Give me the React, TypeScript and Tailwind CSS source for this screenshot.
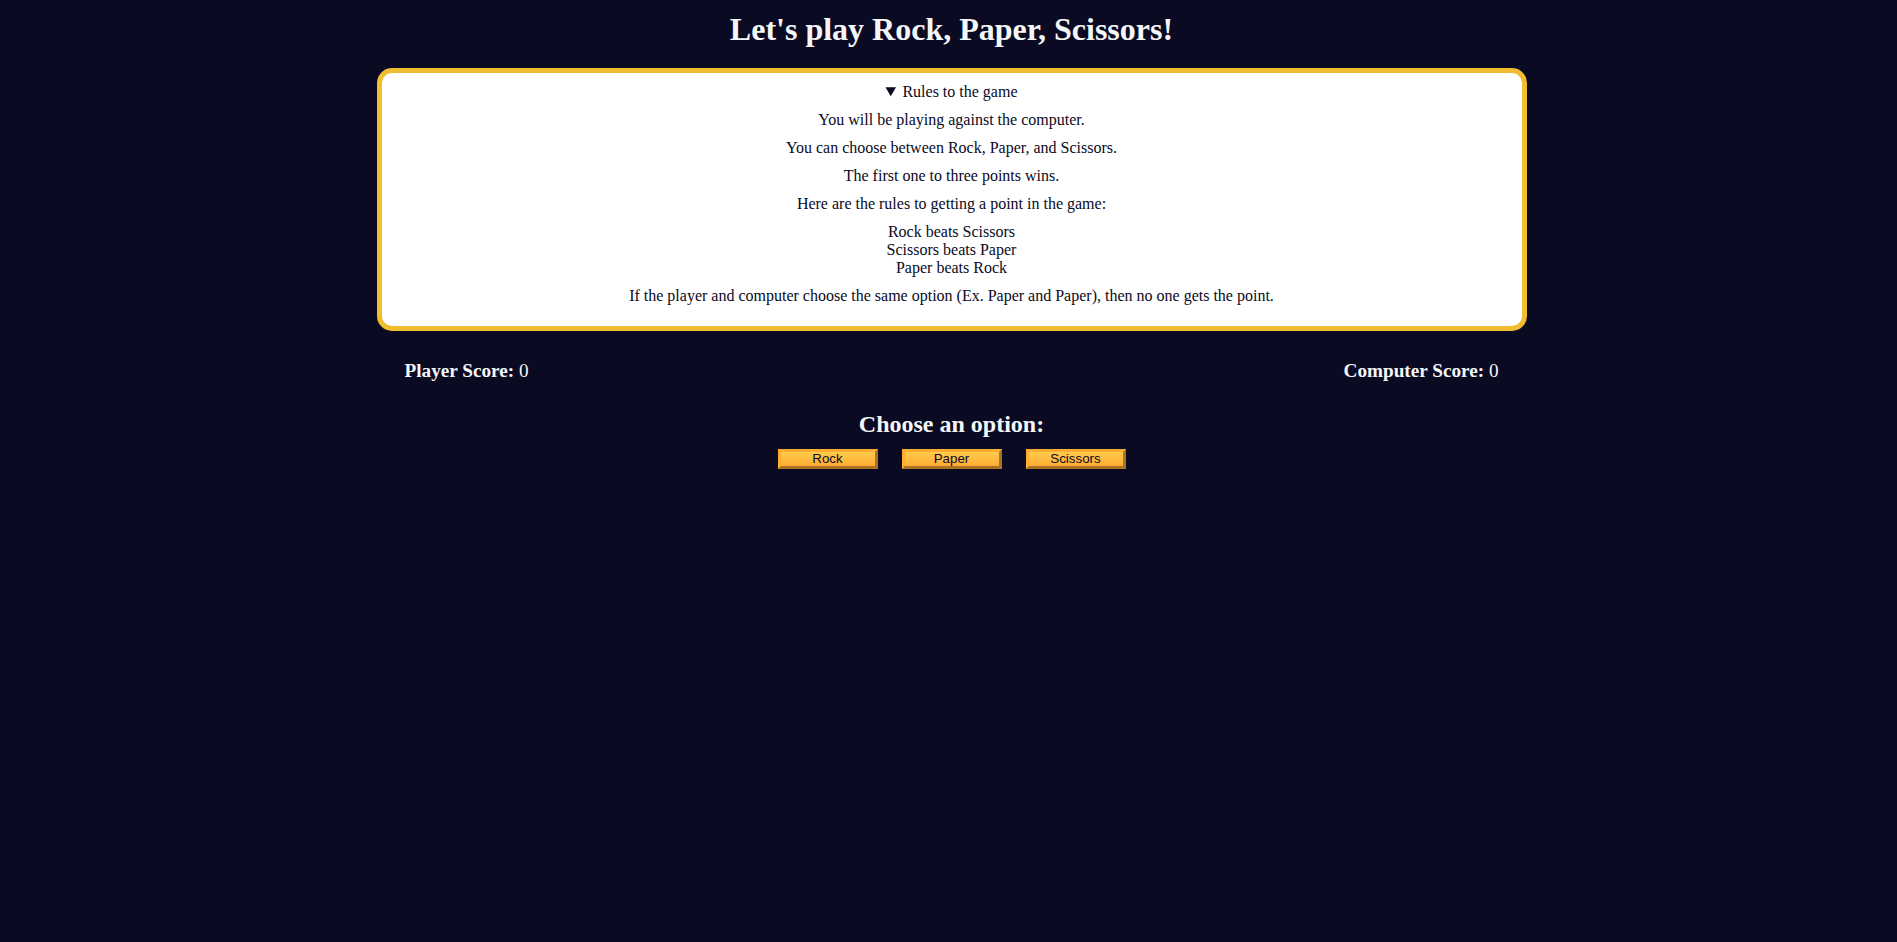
import { useState } from "react";

const RULES = [
  "You will be playing against the computer.",
  "You can choose between Rock, Paper, and Scissors.",
  "The first one to three points wins.",
  "Here are the rules to getting a point in the game:",
];

const OPTIONS = ["Rock", "Paper", "Scissors"];

export default function App() {
  const [playerScore] = useState(0);
  const [computerScore] = useState(0);

  return (
    <div className="min-h-screen bg-[#0a0a23] pl-[6px] pt-[11px] text-center font-['Liberation_Serif',serif] text-[#0a0a23]">
      <h1 className="mb-[21px] text-[32px] font-bold leading-[36px] text-[#f5f6f7]">
        Let's play Rock, Paper, Scissors!
      </h1>

      <div className="mx-auto w-[1150px] rounded-[15px] border-[5px] border-[#f1be32] bg-white pb-[21px] pt-[10px] text-[16px] leading-[18px]">
        <details open>
          <summary className="cursor-pointer">Rules to the game</summary>
          {RULES.map((line) => (
            <p key={line} className="mt-[10px]">
              {line}
            </p>
          ))}
          <p className="mt-[10px]">
            Rock beats Scissors
            <br />
            Scissors beats Paper
            <br />
            Paper beats Rock
          </p>
          <p className="mt-[10px]">
            If the player and computer choose the same option (Ex. Paper and
            Paper), then no one gets the point.
          </p>
        </details>
      </div>

      <div className="mx-auto mt-[29px] flex w-[1150px] justify-between px-[28px] text-[19.2px] leading-[21px] text-[#f5f6f7]">
        <p>
          <strong>Player Score:</strong> <span>{playerScore}</span>
        </p>
        <p>
          <strong>Computer Score:</strong> <span>{computerScore}</span>
        </p>
      </div>

      <h2 className="mt-[30px] text-[24px] font-bold leading-[27px] text-[#f5f6f7]">
        Choose an option:
      </h2>
      <div className="mt-[11px] flex justify-center gap-[24px]">
        {OPTIONS.map((opt) => (
          <button
            key={opt}
            className="flex h-[20px] w-[100px] cursor-pointer items-center justify-center border-[3px] border-[#feac32] bg-linear-to-b from-[#fecc4c] to-[#ffac33] font-['Liberation_Sans',sans-serif] text-[13.33px] leading-none text-[#0a0a23] [border-style:outset]"
          >
            {opt}
          </button>
        ))}
      </div>
    </div>
  );
}
